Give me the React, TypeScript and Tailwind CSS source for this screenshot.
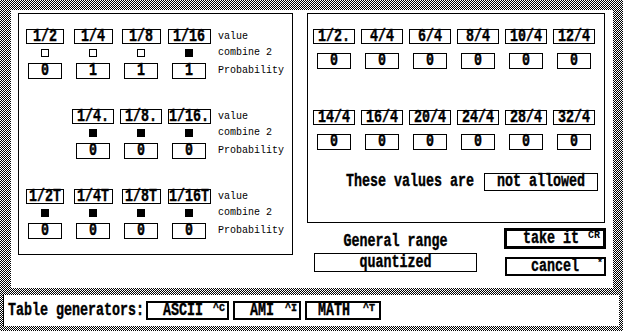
import type { ReactNode } from 'react'

const BIG = "font-['Liberation_Mono',monospace] font-bold text-[13.33px] leading-none text-black [-webkit-text-stroke:0.3px_#000]"
const SMALL = "font-['Liberation_Mono',monospace] text-[10px] leading-none text-black"

function Tall({ children }: { children: ReactNode }) {
  return <span className="inline-block scale-y-[1.35] whitespace-pre">{children}</span>
}

interface Cell {
  v: string
  w: string
  c: boolean
  p: string
}

const row1: (Cell | null)[] = [
  { v: '1/2', w: 'w-[38px]', c: false, p: '0' },
  { v: '1/4', w: 'w-[39px]', c: false, p: '1' },
  { v: '1/8', w: 'w-[39px]', c: false, p: '1' },
  { v: '1/16', w: 'w-[43px]', c: true, p: '1' },
]
const row2: (Cell | null)[] = [
  null,
  { v: '1/4.', w: 'w-[42px]', c: true, p: '0' },
  { v: '1/8.', w: 'w-[42px]', c: true, p: '0' },
  { v: '1/16.', w: 'w-[43px]', c: true, p: '0' },
]
const row3: (Cell | null)[] = [
  { v: '1/2T', w: 'w-[38px]', c: true, p: '0' },
  { v: '1/4T', w: 'w-[39px]', c: true, p: '0' },
  { v: '1/8T', w: 'w-[39px]', c: true, p: '0' },
  { v: '1/16T', w: 'w-[43px]', c: true, p: '0' },
]

function NoteRow({ cells, className }: { cells: (Cell | null)[]; className?: string }) {
  return (
    <div className={`flex ${className ?? ''}`}>
      {cells.map((c, i) => (
        <div key={i} className="flex w-[48px] flex-col items-center">
          {c && (
            <>
              <div className={`flex h-[15px] ${c.w} items-center justify-center border border-black ${BIG}`}>
                <Tall>{c.v}</Tall>
              </div>
              <div className={`mt-[5px] size-[8px] border border-black ${c.c ? 'bg-black' : 'bg-white'}`} />
              <div className={`mt-[6px] flex h-[16px] w-[34px] items-center justify-center border border-black ${BIG}`}>
                <Tall>{c.p}</Tall>
              </div>
            </>
          )}
        </div>
      ))}
      <div className={`ml-[5px] flex flex-col ${SMALL}`}>
        <div className="flex h-[15px] items-center">value</div>
        <div className="mt-[5px] flex h-[8px] items-center">combine 2</div>
        <div className="mt-[6px] flex h-[16px] items-center">Probability</div>
      </div>
    </div>
  )
}

function ValueGrid({ values }: { values: string[] }) {
  return (
    <div className="flex">
      {values.map((v) => (
        <div key={v} className="flex w-[48px] flex-col items-center">
          <div className={`flex h-[15px] w-[42px] items-center justify-center border border-black ${BIG}`}>
            <Tall>{v}</Tall>
          </div>
          <div className={`mt-[9px] flex h-[16px] w-[34px] items-center justify-center border border-black ${BIG}`}>
            <Tall>0</Tall>
          </div>
        </div>
      ))}
    </div>
  )
}

function GenButton({ label, sup, w, ml, pl, supLeft }: { label: string; sup: string; w: string; ml: string; pl: string; supLeft: string }) {
  return (
    <div className={`relative flex h-[19px] ${w} ${ml} ${pl} items-center border-2 border-black ${BIG}`}>
      <Tall>{label}</Tall>
      <span className={`absolute top-[1px] ${supLeft} ${SMALL} text-[9px]`}>{sup}</span>
    </div>
  )
}

export default function App() {
  return (
    <div className="h-[331px] w-[623px] overflow-hidden bg-white bg-[image:repeating-conic-gradient(#000_0_25%,#fff_0_50%)] bg-[length:2px_2px] pt-[10px]">
      {/* main dialog */}
      <div className="ml-[11px] flex h-[278px] w-[602px] bg-white pl-[7px] pt-[3px]">
        <div className="h-[242px] w-[275px] border border-black pl-[2px] pt-[15px]">
          <NoteRow cells={row1} />
          <NoteRow cells={row2} className="mt-[30px]" />
          <NoteRow cells={row3} className="mt-[30px]" />
        </div>

        <div className="ml-[14px] flex w-[299px] flex-col">
          <div className="flex h-[210px] w-[298px] flex-col border border-black pl-[2px] pt-[15px]">
            <ValueGrid values={['1/2.', '4/4', '6/4', '8/4', '10/4', '12/4']} />
            <div className="mt-[41px]">
              <ValueGrid values={['14/4', '16/4', '20/4', '24/4', '28/4', '32/4']} />
            </div>
            <div className={`mt-[23px] flex items-center justify-end pr-[6px] ${BIG}`}>
              <Tall>These values are</Tall>
              <div className="ml-[10px] flex h-[18px] w-[114px] items-center justify-center border border-black">
                <Tall>not allowed</Tall>
              </div>
            </div>
          </div>

          <div className={`flex ${BIG}`}>
            <div className="ml-[7px] flex w-[163px] flex-col items-center">
              <div className="mt-[11px] flex h-[16px] items-center">
                <Tall>General range</Tall>
              </div>
              <div className="mt-[3px] flex h-[19px] w-[163px] items-center justify-center border border-black">
                <Tall>quantized</Tall>
              </div>
            </div>
            <div className="ml-[27px] flex flex-col">
              <div className="relative mt-[5px] flex h-[21px] w-[102px] items-center justify-end border-[3px] border-black pr-[24px]">
                <Tall>take it</Tall>
                <span className={`absolute right-[3px] top-[0px] ${SMALL} text-[9px] [-webkit-text-stroke:0px]`}>CR</span>
              </div>
              <div className="relative ml-[1px] mt-[8px] flex h-[19px] w-[101px] items-center justify-end border-2 border-black pr-[25px]">
                <Tall>cancel</Tall>
                <span className={`absolute right-[1px] top-[0px] ${SMALL} [-webkit-text-stroke:0px]`}>*</span>
              </div>
            </div>
          </div>
        </div>
      </div>

      {/* bottom strip */}
      <div className="ml-[3px] mt-[7px] flex h-[31px] w-[616px] items-center border-l border-black bg-white pl-[4px]">
        <span className={BIG}>
          <Tall>Table generators:</Tall>
        </span>
        <GenButton label="ASCII" sup="^C" w="w-[83px]" ml="ml-[2px]" pl="pl-[15px]" supLeft="left-[65px]" />
        <GenButton label="AMI" sup="^I" w="w-[68px]" ml="ml-[4px]" pl="pl-[15px]" supLeft="left-[50px]" />
        <GenButton label="MATH" sup="^T" w="w-[76px]" ml="ml-[4px]" pl="pl-[11px]" supLeft="left-[56px]" />
      </div>
    </div>
  )
}
